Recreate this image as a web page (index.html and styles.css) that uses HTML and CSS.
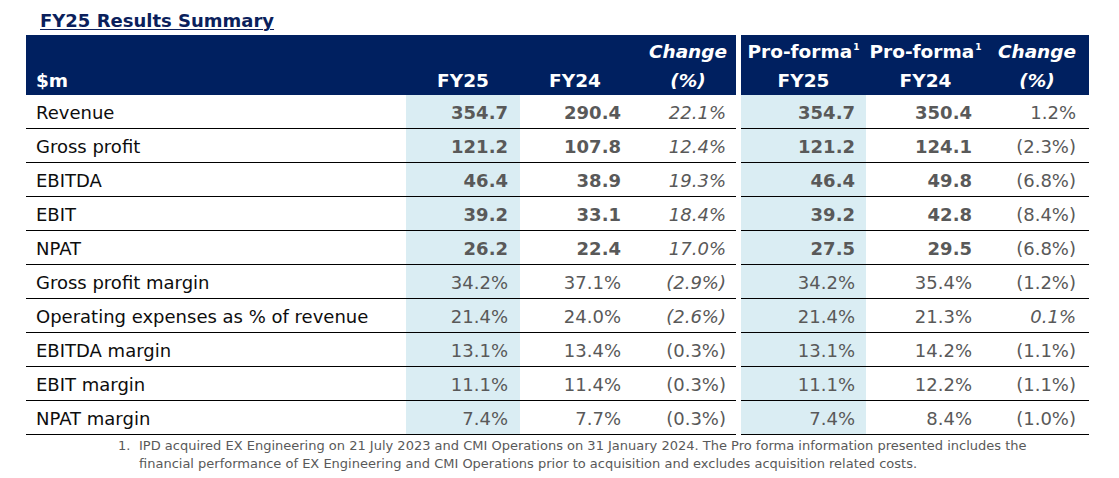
FILE: index.html
```html
<!DOCTYPE html>
<html lang="en">
<head>
<meta charset="utf-8">
<title>FY25 Results Summary</title>
<link rel="stylesheet" href="styles.css">
</head>
<body>
<div class="page">
  <h1 class="title">FY25 Results Summary</h1>
  <table class="summary">
    <colgroup>
      <col class="c-label"><col class="c-fy25"><col class="c-fy24"><col class="c-chg">
      <col class="c-gap">
      <col class="c-pf25"><col class="c-pf24"><col class="c-chg2">
    </colgroup>
    <thead>
      <tr>
        <th class="h-label">$m</th>
        <th>FY25</th>
        <th>FY24</th>
        <th class="h-chg"><i>Change</i><br><i>(%)</i></th>
        <th class="gap"></th>
        <th>Pro-forma<sup>1</sup><br>FY25</th>
        <th>Pro-forma<sup>1</sup><br>FY24</th>
        <th><i>Change</i><br><i>(%)</i></th>
      </tr>
    </thead>
    <tbody>
      <tr class="bold"><td class="label">Revenue</td><td class="shade">354.7</td><td class="fy24">290.4</td><td class="chg it">22.1%</td><td class="gap"></td><td class="shade pf25">354.7</td><td class="pf24">350.4</td><td class="chg2">1.2%</td></tr>
      <tr class="bold"><td class="label">Gross profit</td><td class="shade">121.2</td><td class="fy24">107.8</td><td class="chg it">12.4%</td><td class="gap"></td><td class="shade pf25">121.2</td><td class="pf24">124.1</td><td class="chg2">(2.3%)</td></tr>
      <tr class="bold"><td class="label">EBITDA</td><td class="shade">46.4</td><td class="fy24">38.9</td><td class="chg it">19.3%</td><td class="gap"></td><td class="shade pf25">46.4</td><td class="pf24">49.8</td><td class="chg2">(6.8%)</td></tr>
      <tr class="bold"><td class="label">EBIT</td><td class="shade">39.2</td><td class="fy24">33.1</td><td class="chg it">18.4%</td><td class="gap"></td><td class="shade pf25">39.2</td><td class="pf24">42.8</td><td class="chg2">(8.4%)</td></tr>
      <tr class="bold"><td class="label">NPAT</td><td class="shade">26.2</td><td class="fy24">22.4</td><td class="chg it">17.0%</td><td class="gap"></td><td class="shade pf25">27.5</td><td class="pf24">29.5</td><td class="chg2">(6.8%)</td></tr>
      <tr><td class="label">Gross profit margin</td><td class="shade">34.2%</td><td class="fy24">37.1%</td><td class="chg it">(2.9%)</td><td class="gap"></td><td class="shade pf25">34.2%</td><td class="pf24">35.4%</td><td class="chg2">(1.2%)</td></tr>
      <tr><td class="label">Operating expenses as % of revenue</td><td class="shade">21.4%</td><td class="fy24">24.0%</td><td class="chg it">(2.6%)</td><td class="gap"></td><td class="shade pf25">21.4%</td><td class="pf24">21.3%</td><td class="chg2 it">0.1%</td></tr>
      <tr><td class="label">EBITDA margin</td><td class="shade">13.1%</td><td class="fy24">13.4%</td><td class="chg">(0.3%)</td><td class="gap"></td><td class="shade pf25">13.1%</td><td class="pf24">14.2%</td><td class="chg2">(1.1%)</td></tr>
      <tr><td class="label">EBIT margin</td><td class="shade">11.1%</td><td class="fy24">11.4%</td><td class="chg">(0.3%)</td><td class="gap"></td><td class="shade pf25">11.1%</td><td class="pf24">12.2%</td><td class="chg2">(1.1%)</td></tr>
      <tr><td class="label">NPAT margin</td><td class="shade">7.4%</td><td class="fy24">7.7%</td><td class="chg">(0.3%)</td><td class="gap"></td><td class="shade pf25">7.4%</td><td class="pf24">8.4%</td><td class="chg2">(1.0%)</td></tr>
    </tbody>
  </table>
  <ol class="notes">
    <li><span class="num">1.</span><span class="text">IPD acquired EX Engineering on 21 July 2023 and CMI Operations on 31 January 2024. The Pro forma information presented includes the financial performance of EX Engineering and CMI Operations prior to acquisition and excludes acquisition related costs.</span></li>
  </ol>
</div>
</body>
</html>
```

FILE: styles.css
```css
html, body {
  margin: 0;
  padding: 0;
  background: #ffffff;
}

body {
  font-family: "DejaVu Sans", "Open Sans", sans-serif;
  color: #0d0d0d;
}

.page {
  padding: 0 0 0 26px;
}

.title {
  margin: 0 0 4px 14px;
  padding-top: 11px;
  font-size: 18px;
  line-height: 20px;
  font-weight: 700;
  color: #0b1f5c;
  text-decoration: underline;
  text-decoration-thickness: 1px;
  text-underline-offset: 2px;
}

.summary {
  border-collapse: collapse;
  table-layout: fixed;
  width: 1063px;
}

.c-label { width: 380px; }
.c-fy25 { width: 114px; }
.c-fy24 { width: 110px; }
.c-chg { width: 106px; }
.c-gap { width: 5px; }
.c-pf25 { width: 125px; }
.c-pf24 { width: 119px; }
.c-chg2 { width: 104px; }

.summary th {
  background: #002060;
  color: #ffffff;
  font-weight: 700;
  font-size: 18.5px;
  line-height: 29px;
  height: 60px;
  padding: 0;
  vertical-align: bottom;
  text-align: center;
  white-space: nowrap;
}

.summary th.h-label {
  text-align: left;
  padding-left: 10px;
}

.summary th.h-chg {
  padding-left: 10px;
}

.summary th sup {
  font-size: 9px;
  line-height: 0;
  vertical-align: 8px;
  margin-left: 1px;
}

.summary th.gap,
.summary td.gap {
  background: #ffffff;
  border: none;
  padding: 0;
}

.summary td {
  height: 33px;
  box-sizing: border-box;
  padding: 2px 9px 0 0;
  border-bottom: 1px solid #000000;
  font-size: 18px;
  line-height: 31px;
  text-align: right;
  color: #595959;
  white-space: nowrap;
}

.summary td.label {
  text-align: left;
  padding-left: 10px;
  color: #0d0d0d;
}

.summary td.shade {
  background: #daedf3;
  padding-right: 12px;
}

.summary td.chg { padding-right: 10px; }
.summary td.pf25 { padding-right: 11px; }
.summary td.pf24 { padding-right: 13px; }
.summary td.chg2 { padding-right: 13px; }

.summary tr.bold td.shade,
.summary tr.bold td.fy24,
.summary tr.bold td.pf24 {
  font-weight: 700;
}

.summary td.it {
  font-style: italic;
}

.notes {
  list-style: none;
  margin: 2px 0 0 92px;
  padding: 0;
  font-size: 13px;
  line-height: 18px;
  color: #595959;
}

.notes li {
  display: flex;
}

.notes .num {
  flex: 0 0 21px;
}

.notes .text {
  width: 906px;
}
```
